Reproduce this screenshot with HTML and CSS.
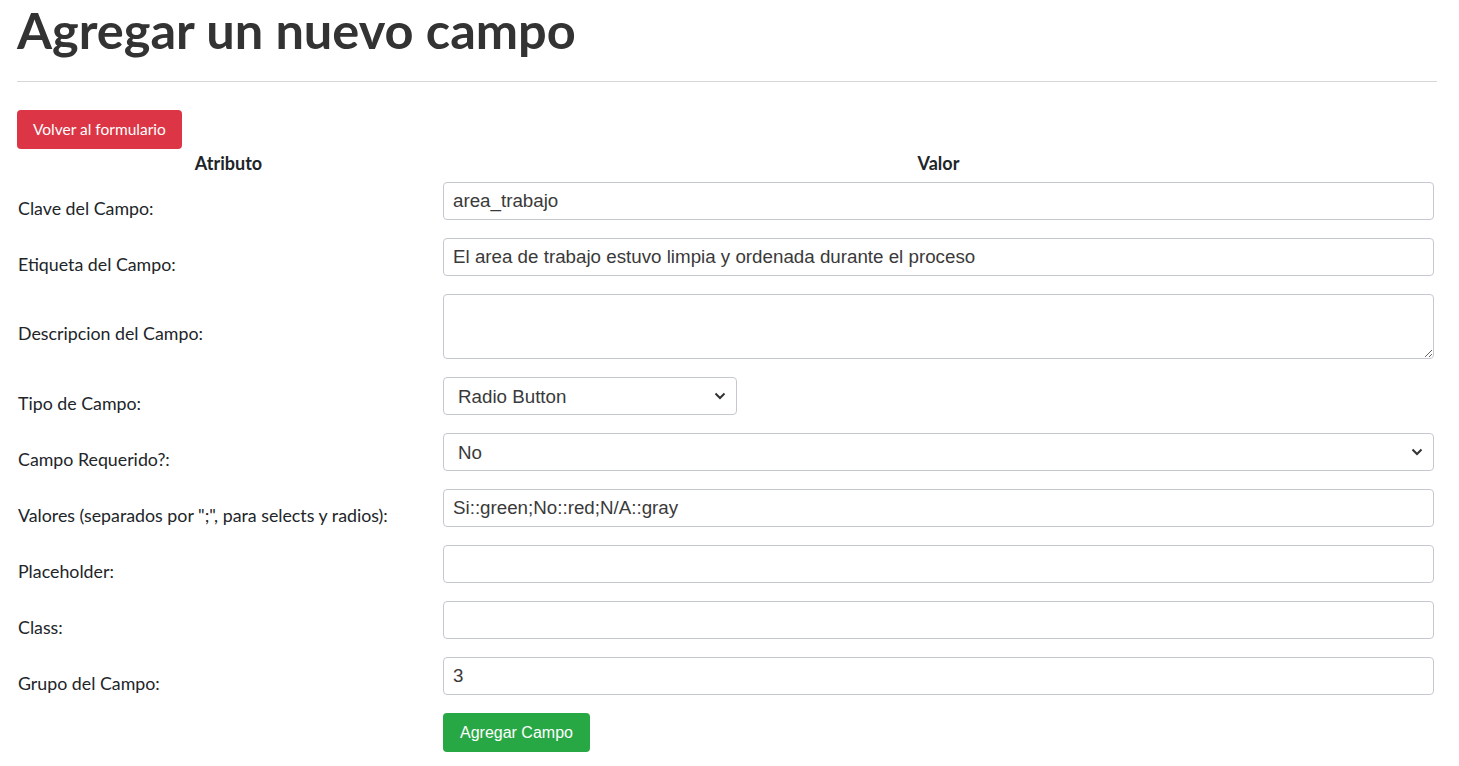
FILE: index.html
```html
<!DOCTYPE html>
<html lang="es">
<head>
<meta charset="UTF-8">
<meta name="viewport" content="width=device-width, initial-scale=1.0">
<title>Agregar un nuevo campo</title>
<link rel="stylesheet" href="styles.css">
</head>
<body>

<div class="page">
  <h1 class="page-title">Agregar un nuevo campo</h1>
  <hr class="divider">

  <a href="#" class="btn btn-danger">Volver al formulario</a>

  <form class="field-form" onsubmit="return false;">
    <table class="field-table">
      <thead>
        <tr>
          <th class="col-attr">Atributo</th>
          <th class="col-value">Valor</th>
        </tr>
      </thead>
      <tbody>
        <tr>
          <td class="label-cell">Clave del Campo:</td>
          <td><input type="text" class="form-control" value="area_trabajo"></td>
        </tr>
        <tr>
          <td class="label-cell">Etiqueta del Campo:</td>
          <td><input type="text" class="form-control" value="El area de trabajo estuvo limpia y ordenada durante el proceso"></td>
        </tr>
        <tr>
          <td class="label-cell">Descripcion del Campo:</td>
          <td><textarea class="form-control area"></textarea></td>
        </tr>
        <tr>
          <td class="label-cell">Tipo de Campo:</td>
          <td>
            <select class="form-control select short">
              <option>Text</option>
              <option selected>Radio Button</option>
              <option>Select</option>
            </select>
          </td>
        </tr>
        <tr>
          <td class="label-cell">Campo Requerido?:</td>
          <td>
            <select class="form-control select">
              <option selected>No</option>
              <option>Si</option>
            </select>
          </td>
        </tr>
        <tr>
          <td class="label-cell">Valores (separados por ";", para selects y radios):</td>
          <td><input type="text" class="form-control" value="Si::green;No::red;N/A::gray"></td>
        </tr>
        <tr>
          <td class="label-cell">Placeholder:</td>
          <td><input type="text" class="form-control" value=""></td>
        </tr>
        <tr>
          <td class="label-cell">Class:</td>
          <td><input type="text" class="form-control" value=""></td>
        </tr>
        <tr>
          <td class="label-cell">Grupo del Campo:</td>
          <td><input type="text" class="form-control" value="3"></td>
        </tr>
        <tr>
          <td></td>
          <td><button type="submit" class="btn btn-success">Agregar Campo</button></td>
        </tr>
      </tbody>
    </table>
  </form>
</div>

</body>
</html>
```

FILE: styles.css
```css
body {
  margin: 0;
  background: #fff;
  color: #212529;
  font-family: 'Lato', 'Noto Sans', sans-serif;
}
.page {
  padding: 0 22px 0 17px;
}
.page-title {
  margin: 0;
  padding-top: 2px;
  font-size: 50.5px;
  line-height: 56px;
  font-weight: 700;
  color: #333;
}
.divider {
  margin: 23px 0 28px;
  border: 0;
  border-top: 1px solid #d6d6d6;
}
.btn {
  display: inline-block;
  border: none;
  border-radius: 4px;
  color: #fff;
  text-decoration: none;
  cursor: pointer;
}
.btn-danger {
  background: #dc3545;
  font-size: 15.5px;
  line-height: 39px;
  padding: 0 16px;
}
.btn-success {
  background: #28a745;
  font-family: 'Liberation Sans', Arial, sans-serif;
  font-size: 16px;
  height: 39px;
  padding: 0 17px;
}
.field-form {
  margin: 0;
}
.field-table {
  width: 100%;
  border-collapse: collapse;
  table-layout: fixed;
}
.col-attr {
  width: 423px;
}
.field-table th {
  font-size: 18px;
  font-weight: 700;
  line-height: 20px;
  padding: 4px 0 0;
  text-align: center;
}
.field-table td {
  padding: 9px 3px 9px 3px;
  vertical-align: middle;
}
.label-cell {
  font-size: 17.8px;
  padding: 13px 0 0 1px !important;
}
.form-control {
  display: block;
  width: 100%;
  box-sizing: border-box;
  height: 38px;
  padding: 0 9px;
  border: 1px solid #c5c8d0;
  border-radius: 4px;
  background: #fff;
  color: #3a3a3a;
  font-family: 'Liberation Sans', Arial, sans-serif;
  font-size: 18.75px;
}
.area {
  height: 65px;
  resize: vertical;
}
.select {
  appearance: none;
  -webkit-appearance: none;
  padding: 0 30px 0 14px;
  background-image: url("data:image/svg+xml,%3Csvg xmlns='http://www.w3.org/2000/svg' width='12' height='8' viewBox='0 0 12 8'%3E%3Cpath d='M1.5 1.5l4.5 4.5 4.5-4.5' fill='none' stroke='%23333' stroke-width='2'/%3E%3C/svg%3E");
  background-repeat: no-repeat;
  background-position: right 10px center;
  background-size: 12px 8px;
}
.select.short {
  width: 294px;
}
```
